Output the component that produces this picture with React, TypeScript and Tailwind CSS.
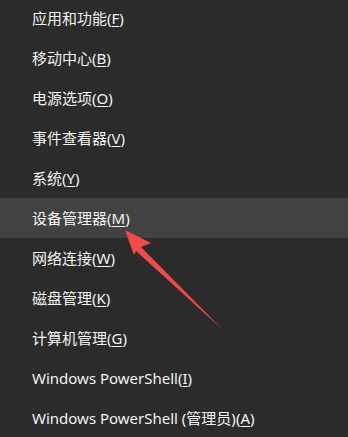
import React from 'react';

type Item = { label: string; key: string; active?: boolean };

const items: Item[] = [
  { label: '应用和功能', key: 'F' },
  { label: '移动中心', key: 'B' },
  { label: '电源选项', key: 'O' },
  { label: '事件查看器', key: 'V' },
  { label: '系统', key: 'Y' },
  { label: '设备管理器', key: 'M', active: true },
  { label: '网络连接', key: 'W' },
  { label: '磁盘管理', key: 'K' },
  { label: '计算机管理', key: 'G' },
  { label: 'Windows PowerShell', key: 'I' },
  { label: 'Windows PowerShell (管理员)', key: 'A' },
];

const App = () => {
  return (
    <div
      className="relative w-[348px] h-[437px] overflow-hidden bg-[#2b2b2b] text-[#f2f2f2]"
      style={{ fontFamily: '"Noto Sans", "Noto Sans CJK SC", sans-serif' }}
    >
      <ul className="-mt-[2px] flex flex-col">
        {items.map((it) => (
          <li
            key={it.key}
            className={`h-[40px] flex items-center pl-[32px] text-[15px] ${it.active ? 'bg-[#424242]' : ''}`}
          >
            <span className="whitespace-pre">
              {it.label}(<span className="underline underline-offset-[2px]">{it.key}</span>)
            </span>
          </li>
        ))}
      </ul>

      {/* red pointer arrow */}
      <svg className="absolute left-0 top-0" width="348" height="437" viewBox="0 0 348 437">
        <polygon points="125,230 151,243 141,247 223,330 136,251 134,255" fill="#f04a4a" />
      </svg>
    </div>
  );
};

export default App;
